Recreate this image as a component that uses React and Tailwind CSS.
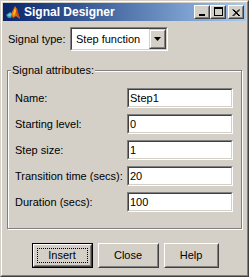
import React from "react";

const font = { fontFamily: '"Liberation Sans", Arial, sans-serif' };

function TitleButton({ children, className = "" }) {
  return (
    <div
      className={`w-[16px] h-[14px] bg-[#d4d0c8] border border-t-white border-l-white border-r-[#404040] border-b-[#404040] ${className}`}
    >
      <div className="w-full h-full border border-t-[#d4d0c8] border-l-[#d4d0c8] border-r-[#808080] border-b-[#808080] flex items-center justify-center">
        {children}
      </div>
    </div>
  );
}

function Field({ value }) {
  return (
    <div className="h-[20px] border border-t-[#808080] border-l-[#808080] border-r-white border-b-white">
      <div className="h-full border border-t-[#404040] border-l-[#404040] border-r-[#d4d0c8] border-b-[#d4d0c8] bg-white flex items-center pl-[1px] text-[11px] text-black">
        {value}
      </div>
    </div>
  );
}

function Button({ label, w, isDefault }) {
  const inner = (
    <div className="h-full border border-t-white border-l-white border-r-[#404040] border-b-[#404040]">
      <div className="h-full border border-t-[#d4d0c8] border-l-[#d4d0c8] border-r-[#808080] border-b-[#808080] flex items-center justify-center p-[2px]">
        {isDefault ? (
          <div className="w-full h-full border border-dotted border-black flex items-center justify-center text-[11px] text-black">
            {label}
          </div>
        ) : (
          <span className="text-[11px] text-black">{label}</span>
        )}
      </div>
    </div>
  );
  return (
    <div className={`h-[25px] ${w} bg-[#d4d0c8] ${isDefault ? "border border-black" : ""}`}>
      {inner}
    </div>
  );
}

const rows = [
  ["Name:", "Step1"],
  ["Starting level:", "0"],
  ["Step size:", "1"],
  ["Transition time (secs):", "20"],
  ["Duration (secs):", "100"],
];

export default function App() {
  return (
    <div style={font} className="w-[249px] h-[277px] bg-[#d4d0c8] select-none">
      <div className="w-full h-full border border-t-[#d4d0c8] border-l-[#d4d0c8] border-r-[#404040] border-b-[#404040]">
        <div className="w-full h-full border border-t-white border-l-white border-r-[#808080] border-b-[#808080] p-[1px] flex flex-col">
          {/* Title bar */}
          <div className="h-[18px] flex items-center bg-gradient-to-r from-[#0a246a] to-[#a6caf0] pl-[2px] pr-[2px]">
            <svg width="16" height="16" viewBox="0 0 16 16">
              <polygon points="1,11 5,8 8,10 6,14 3,14" fill="#3a8ea0" />
              <polygon points="2,11 5,9 7,10 5,13" fill="#6fc8d8" />
              <polygon points="6,10 10,2 12,5 15,15 11,12 8,14" fill="#e07010" />
              <polygon points="8,10 10,4 11,7 9,12" fill="#f8c020" />
              <polygon points="11,7 12,5 15,15 12,11" fill="#c84010" />
            </svg>
            <span className="ml-[3px] text-white font-bold text-[12px] leading-none">Signal Designer</span>
            <div className="ml-auto flex items-center">
              <TitleButton>
                <div className="w-[6px] h-[2px] bg-black mt-[6px] -ml-[1px]" />
              </TitleButton>
              <TitleButton>
                <div className="w-[9px] h-[9px] border border-black border-t-2 -mt-[1px]" />
              </TitleButton>
              <TitleButton className="ml-[2px]">
                <svg width="8" height="7" viewBox="0 0 8 7">
                  <path d="M0.5 0.5 L7 7 M1.5 0.5 L8 7 M7 0.5 L0.5 7 M8 0.5 L1.5 7" stroke="black" strokeWidth="1" />
                </svg>
              </TitleButton>
            </div>
          </div>

          {/* Signal type */}
          <div className="mt-[6px] flex items-center pl-[5px]">
            <span className="text-[11px] text-black w-[62px]">Signal type:</span>
            <div className="w-[98px] h-[24px] border border-t-[#808080] border-l-[#808080] border-r-white border-b-white">
              <div className="h-full border border-t-[#404040] border-l-[#404040] border-r-[#d4d0c8] border-b-[#d4d0c8] bg-white flex items-center">
                <span className="text-[11px] text-black pl-[4px] flex-1">Step function</span>
                <div className="w-[17px] h-full bg-[#d4d0c8] border border-t-[#d4d0c8] border-l-[#d4d0c8] border-r-[#404040] border-b-[#404040]">
                  <div className="h-full border border-t-white border-l-white border-r-[#808080] border-b-[#808080] flex items-center justify-center">
                    <svg width="7" height="4" viewBox="0 0 7 4">
                      <polygon points="0,0 7,0 3.5,4" fill="black" />
                    </svg>
                  </div>
                </div>
              </div>
            </div>
          </div>

          {/* Group box */}
          <div className="relative mt-[19px] ml-[4px] w-[235px] h-[159px] border border-[#808080] shadow-[inset_1px_1px_0_#ffffff,1px_1px_0_#ffffff]">
            <span className="absolute -top-[8px] left-[3px] bg-[#d4d0c8] px-[1px] text-[11px] text-black leading-[14px]">
              Signal attributes:
            </span>
            <div className="pt-[17px] pl-[7px] grid grid-cols-[112px_106px] gap-y-[6px] items-center">
              {rows.map(([label, value]) => (
                <React.Fragment key={label}>
                  <span className="text-[11px] text-black whitespace-nowrap">{label}</span>
                  <Field value={value} />
                </React.Fragment>
              ))}
            </div>
          </div>

          {/* Buttons */}
          <div className="mt-[14px] flex justify-center gap-[5px] pl-[1px]">
            <Button label="Insert" w="w-[61px]" isDefault />
            <Button label="Close" w="w-[61px]" />
            <Button label="Help" w="w-[55px]" />
          </div>
        </div>
      </div>
    </div>
  );
}
